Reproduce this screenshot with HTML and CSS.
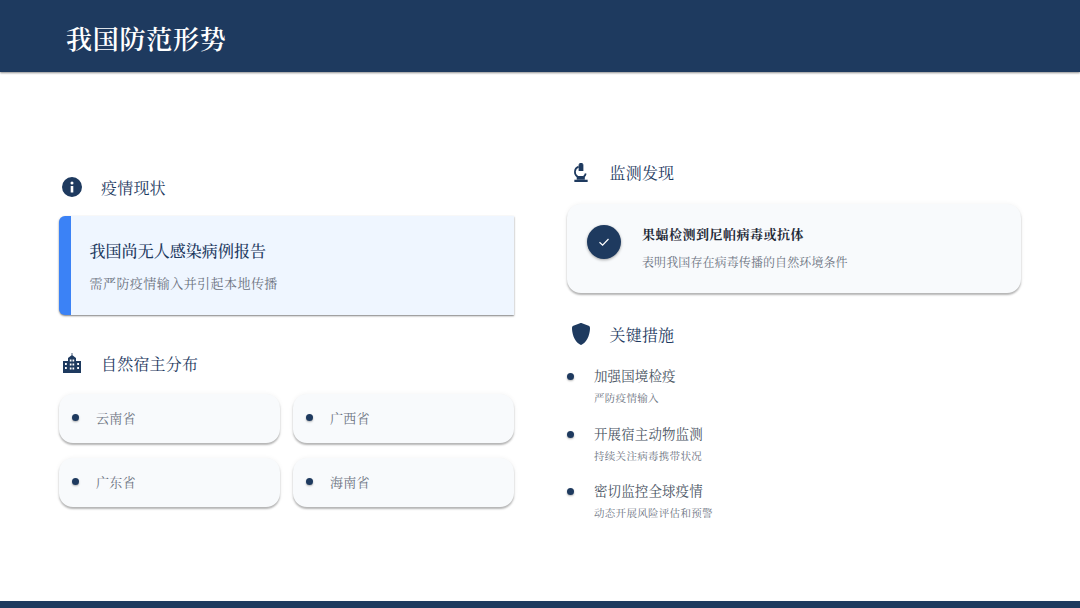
FILE: index.html
```html
<!DOCTYPE html>
<html lang="zh-CN">
<head>
<meta charset="utf-8">
<title>我国防范形势</title>
<link rel="stylesheet" href="styles.css">
</head>
<body>
<div class="slide">
  <header class="top"><h1>我国防范形势</h1></header>
  <main class="cols">
    <section class="col left">
      <div class="head">
        <svg class="ico" viewBox="0 0 20 20"><path fill-rule="evenodd" d="M10 0a10 10 0 1 0 0 20A10 10 0 0 0 10 0zM10 4.500a1.500 1.500 0 1 1 0 3 1.500 1.500 0 0 1 0-3zM8.700 9h2.600v6.500H8.700z"/></svg>
        <h2>疫情现状</h2>
      </div>
      <div class="alert">
        <div class="alert-t">我国尚无人感染病例报告</div>
        <div class="alert-s">需严防疫情输入并引起本地传播</div>
      </div>
      <div class="head h2row">
        <svg class="ico" viewBox="0 0 20 20"><path fill-rule="evenodd" d="M9.600 0h.8v2.300L14 5v3h5v12H1V8h5V5l3.600-2.700zM3 10v2h1.800v-2zm0 4v2h1.800v-2zM7.800 6.500v2h1.700v-2zm2.700 0v2h1.700v-2zM7.800 10.500v2h1.700v-2zm2.700 0v2h1.700v-2zM7.800 14.500v2h1.700v-2zm2.700 0v2h1.700v-2zM15.200 10v2H17v-2zm0 4v2H17v-2z"/></svg>
        <h2>自然宿主分布</h2>
      </div>
      <div class="grid">
        <div class="tile"><i class="dot"></i><span>云南省</span></div>
        <div class="tile"><i class="dot"></i><span>广西省</span></div>
        <div class="tile"><i class="dot"></i><span>广东省</span></div>
        <div class="tile"><i class="dot"></i><span>海南省</span></div>
      </div>
    </section>
    <section class="col right">
      <div class="head">
        <svg class="ico scope" viewBox="0 0 16 20"><path d="M6.300 0h3.400v1.200h.8v7.300H5.500V1.200h.8z"/><path d="M5.500 3.800A6 6 0 0 0 4.400 14.500h6.100M10.800 14.500A6 6 0 0 0 13 11" fill="none" stroke="#1e3a5f" stroke-width="1.800"/><rect x="1" y="17.600" width="14" height="2.400"/><rect x="3.500" y="14" width="8.500" height="3.600"/></svg>
        <h2>监测发现</h2>
      </div>
      <div class="finding">
        <div class="badge"><svg viewBox="0 0 12 12"><path d="M1.500 6.300 4.600 9.200 10.500 3" fill="none" stroke="#fff" stroke-width="1.200"/></svg></div>
        <div>
          <div class="f-t">果蝠检测到尼帕病毒或抗体</div>
          <div class="f-s">表明我国存在病毒传播的自然环境条件</div>
        </div>
      </div>
      <div class="head h2row2">
        <svg class="ico shield" viewBox="0 0 18 22"><path d="M9 0c.4 0 .7.100 1 .200l6.600 2.600c.8.300 1.400 1.100 1.400 2.100 0 4.400-1.500 12.500-8 16.700-.6.400-1.400.4-2 0C1.500 17.400 0 9.300 0 4.900c0-1 .6-1.800 1.400-2.100L8 .200C8.300.100 8.600 0 9 0z"/></svg>
        <h2>关键措施</h2>
      </div>
      <ul class="list">
        <li><i class="dot"></i><div><div class="l-t">加强国境检疫</div><div class="l-s">严防疫情输入</div></div></li>
        <li><i class="dot"></i><div><div class="l-t">开展宿主动物监测</div><div class="l-s">持续关注病毒携带状况</div></div></li>
        <li><i class="dot"></i><div><div class="l-t">密切监控全球疫情</div><div class="l-s">动态开展风险评估和预警</div></div></li>
      </ul>
    </section>
  </main>
  <footer class="bottom"></footer>
</div>
</body>
</html>
```
FILE: styles.css
```css
* { box-sizing: border-box; }
html, body { margin: 0; padding: 0; }
body { width: 1080px; height: 608px; overflow: hidden; background: #fff; font-family: "Noto Serif CJK SC", "Liberation Serif", "Noto Sans CJK SC", serif; }
.slide { width: 1080px; height: 608px; display: flex; flex-direction: column; }
.top { height: 72px; flex: none; background: #1e3a5f; box-shadow: 0 1px 2px rgba(0,0,0,.45); display: flex; align-items: center; padding: 4px 0 0 66px; }
.top h1 { margin: 0; color: #fff; font-size: 26px; font-weight: 600; letter-spacing: .75px; line-height: 1; }
.cols { flex: 1; display: flex; gap: 53px; padding: 0 59px; }
.col { width: 455px; display: flex; flex-direction: column; }
.left { padding-top: 103px; }
.right { padding-top: 88px; }
.head { display: flex; align-items: center; height: 24px; }
.ico { width: 20px; height: 20px; fill: #1e3a5f; flex: none; margin-left: 3px; }
.head h2 { margin: 0 0 0 19px; font-size: 16px; font-weight: 400; color: #1e3a5f; letter-spacing: .2px; }
.right .ico { margin-left: 4px; }
.right h2 { margin-left: 18.500px; }
.scope { height: 19px; }
.shield { height: 22px; }
.alert { margin-top: 17px; height: 99px; background: #eff6ff; border-left: 12px solid #3b82f6; border-radius: 6px 0 0 6px; box-shadow: 0 1px 2px rgba(0,0,0,.5); padding: 23px 0 0 18.500px; }
.alert-t { font-size: 16px; line-height: 24px; font-weight: 500; color: #1e3a5f; letter-spacing: .05px; }
.alert-s { font-size: 13px; line-height: 20px; margin-top: 10px; color: #6b7280; letter-spacing: .45px; }
.h2row { margin-top: 36px; }
.grid { margin-top: 19px; display: grid; grid-template-columns: 221px 221px; gap: 15px 13px; }
.tile { height: 49px; background: #f8fafc; border-radius: 14px; box-shadow: 0 2px 2px rgba(0,0,0,.28), 0 0 5px rgba(0,0,0,.05); display: flex; align-items: center; padding-left: 13px; color: #6b7280; font-size: 13px; letter-spacing: .3px; }
.dot { width: 7px; height: 7px; border-radius: 50%; background: #1e3a5f; box-shadow: 0 1px 2px rgba(0,0,0,.3); flex: none; }
.tile .dot { margin-top: -2px; }
.tile span { margin: -2px 0 0 17px; }
.finding { margin-top: 20px; height: 89px; background: #f8fafc; border-radius: 14px; box-shadow: 0 2px 2px rgba(0,0,0,.28), 0 0 5px rgba(0,0,0,.05); display: flex; align-items: flex-start; padding: 20px 0 0 20px; gap: 21px; }
.badge { width: 34px; height: 34px; margin-top: 1px; border-radius: 50%; background: #1e3a5f; box-shadow: 0 1px 3px rgba(0,0,0,.35); display: flex; align-items: center; justify-content: center; flex: none; }
.badge svg { width: 12px; height: 12px; }
.f-t { font-size: 13px; font-weight: 700; color: #1f2937; line-height: 20px; letter-spacing: .5px; }
.f-s { font-size: 12px; color: #6b7280; line-height: 18px; margin-top: 9px; letter-spacing: .1px; }
.h2row2 { margin-top: 29px; }
.list { list-style: none; margin: 19px 0 0; padding: 0; display: flex; flex-direction: column; gap: 17.500px; }
.list li { display: flex; align-items: flex-start; }
.list .dot { margin-top: 8px; }
.list li > div { margin-left: 20px; }
.l-t { font-size: 13.500px; line-height: 20px; color: #4b5563; letter-spacing: .1px; }
.l-s { font-size: 10.500px; line-height: 14px; margin-top: 6px; color: #6b7280; letter-spacing: .3px; }
.bottom { height: 7px; flex: none; background: #1e3a5f; }
```
